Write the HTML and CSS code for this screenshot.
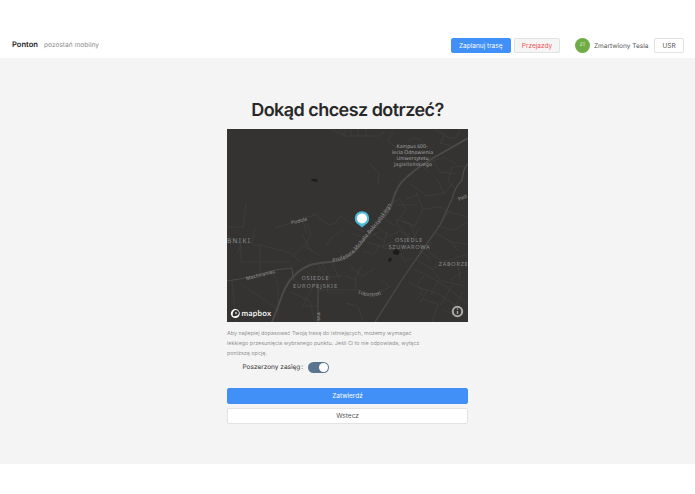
FILE: index.html
```html
<!DOCTYPE html>
<html lang="pl">
<head>
  <meta charset="UTF-8" />
  <meta name="viewport" content="width=device-width, initial-scale=1.0" />
  <title>Ponton</title>
  <link rel="stylesheet" href="styles.css">
</head>
<body>
  <header class="header">
    <div class="brand">
      <span class="brand-name">Ponton</span>
      <span class="brand-sub">pozostań mobilny</span>
    </div>
    <div class="nav">
      <button class="btn btn-primary btn-plan">Zaplanuj trasę</button>
      <button class="btn btn-danger btn-rides">Przejazdy</button>
      <span class="avatar">ZT</span>
      <span class="user-name">Zmartwiony Tesla</span>
      <button class="btn btn-role">USR</button>
    </div>
  </header>

  <main class="content">
    <div class="planner">
      <h1>Dokąd chcesz dotrzeć?</h1>

      <svg class="map" viewBox="0 0 241 193" width="241" height="193">
        <defs>
          <path id="bobrzynskiego" d="M106 133C122 130 129 123 138 110C151 95 160 84 166 72" />
          <path id="lubostron" d="M131 164Q143 170 156 165" />
        </defs>
        <rect class="land" width="241" height="193" />

        <g class="street">
          <path d="M106 1l12 6h35M113 0l5 7V0M124 7V0M139 7V0M131 7V0M153 7l4-4" />
          <path d="M19 74l-3 24H0M48 99l42-14 4 6 8 5 7-2 4-7 24 16M76 92l4 13M116 101l-12 8-5 8" />
          <path d="M166 4l-5 8 13 11 8-4M180 14q6-8 14-3l7 9M174 23l15 3M207 0l15 9 7 0 4-9M218 5l-5 9 15 4" />
          <path d="M143 35l9 9-1 11M184 55l16 12 17-3 9-10M189 63l7 17 17-2 13 6M196 80l-8 17-14-5M170 76h21M168 90l16 5 4 13M217 64l-7-14M239 37l-14 1-4 13 8 10" />
          <path d="M165 74l8-4 6 10-10 14 11 12M191 66l-13 4M203 27l10 16 16 2M200 34l17-6 12 7M184 44l10-7 7 5" />
          <path d="M0 114h25l3-14M25 116h8l31 8 9 9M33 115v33M14 116v17M14 133h50M65 139l2 12 9 7M65 128l12-11 15 9M78 117l6-12-4-9M84 122l-9-16M0 106l14 10-4 9" />
          <path d="M5 152l4 41M14 155l37 25M51 155v38M44 142l7 12M63 163l20 9 5 21M90 134l9 15 17-3M93 132l11 17M104 132l8 17M100 150l1 14h17M74 177h17V158M80 143l15 19M85 159l-9 18" />
          <path d="M126 105l14 4 12-6M148 97l15 10 10-5 13 8M155 88l13 9M140 113l16 5 10-6M147 106l11 6M135 122l12 3 6-9M160 103l-4 16 15 3M182 104l-7 17M192 98l-8 18" />
          <path d="M118 147l10 3 7-14M123 137l12 10 12-7M129 150l-1 11M91 161h40q12 7 24 1l8-4-10-8M118 174l13 3 5 16" />
          <path d="M198 120l18 13 25-8M204 130l-12-9M188 130l17 10 9 12 24 5M186 140l12 5-8 11M198 145l20 12 23 18M191 158l21 7 17 12M181 153l15 8-6 9M212 151l-8 15M225 157l-13 21M236 163l-12 20M195 170l16 5-6 18M207 103l17 10 17 2M210 97l17 4 14-8M213 96l8-13 20 5M222 110l9 12" />
          <path d="M190 112l9 9 6-8M171 122l7 10 8-3M205 141l10-8M216 180l14 8M201 160l-8 13M235 143l-12 8M230 131l3 19" />
        </g>
        <path class="road" d="M0 152L18 149 48 141 65 139 66 148M91 156V193" />
        <path class="road road-mid" d="M148 193L178 146 213 96 225 70Q228 58 235 51L237 41 241 34" />
        <path class="road road-main" d="M45 193Q51 178 56 164Q64 144 83 136C93 133 106 134 117 130C129 124 134 115 142 105C153 91 163 84 165 74Q170 55 180 48Q192 37 208 28L241 9" />

        <g class="building">
          <path d="M84 50l6 0 1 3-6-1z" />
          <path d="M161 131l2-3 2 2-1 2-2 1zM166 122l4-2 3 3-2 3-5-1z" />
        </g>

        <g class="label">
          <text x="185" y="18.500" textLength="31">Kampus 600-</text>
          <text x="185.500" y="24.500" textLength="41">lecia Odnowienia</text>
          <text x="185.500" y="30.500" textLength="32">Uniwersytetu</text>
          <text x="186" y="36.500" textLength="38">Jagiellońskiego</text>
        </g>
        <g class="label label-street">
          <text transform="translate(72.500 93.500) rotate(-13)">Podole</text>
          <text transform="translate(34 147.500) rotate(-14)" textLength="30">Machnaniec</text>
          <text transform="translate(236.300 70) rotate(-24)" textLength="9.500">Past</text>
          <text transform="translate(93 188) rotate(-90)">iska</text>
          <text class="label-path"><textPath href="#bobrzynskiego" textLength="84">Profesora Michała Bobrzyńskiego</textPath></text>
          <text class="label-path"><textPath href="#lubostron" textLength="24">Lubostroń</textPath></text>
        </g>
        <g class="label label-area">
          <text x="11.500" y="113.500" class="label-big" textLength="23">BNIKI</text>
          <text x="88" y="151" textLength="27">OSIEDLE</text>
          <text x="88" y="158.500" textLength="44">EUROPEJSKIE</text>
          <text x="181.500" y="113" textLength="27">OSIEDLE</text>
          <text x="182" y="120" textLength="41">SZUWAROWA</text>
          <text x="226.200" y="136.500" textLength="29">ZABORZE</text>
        </g>

        <path class="pin" d="M135 98.500L129.500 94A7.200 7.200 0 1 1 140.500 94Z" />
        <circle class="pin-dot" cx="135" cy="89.400" r="5" />

        <circle cx="8.300" cy="184.600" r="4.500" fill="#fff" />
        <path d="M5.900 187c-.5-2.300-.1-3.900 1-5a2.900 2.900 0 0 1 4.100 4.100c-1.200 1.100-2.800 1.300-5.100.9z" fill="#343332" />
        <path d="M9 182.800l.4.800.8.400-.8.400-.4.800-.4-.8-.8-.4.800-.4z" fill="#fff" />
        <text class="logo-text" x="14.500" y="187" textLength="29.500">mapbox</text>

        <circle cx="230.500" cy="182.500" r="4.700" fill="none" stroke="#aaa" stroke-width="2" />
        <path d="M230.500 182v3M230.500 179.500v1.300" stroke="#aaa" stroke-width="1.300" />
      </svg>

      <p class="hint">Aby najlepiej dopasować Twoją trasę do istniejących, możemy wymagać<br>lekkiego przesunięcia wybranego punktu. Jeśli Ci to nie odpowiada, wyłącz<br>poniższą opcję.</p>

      <div class="range-row">
        <span class="range-label">Poszerzony zasięg<span class="colon">:</span></span>
        <span class="switch"><span class="switch-knob"></span></span>
      </div>

      <button class="btn btn-primary btn-block">Zatwierdź</button>
      <button class="btn btn-block">Wstecz</button>
    </div>
  </main>
</body>
</html>
```

FILE: styles.css
```css
* {
  box-sizing: border-box;
}

body {
  margin: 0;
  padding-top: 33px;
  background: #fff;
  color: #333;
  font-family: Inter, sans-serif;
  font-size: 6.5px;
  text-rendering: geometricPrecision;
}

.header {
  height: 24.5px;
  padding: 0 11px 0 12px;
  display: flex;
  justify-content: space-between;
  align-items: center;
}

.brand {
  display: flex;
  align-items: baseline;
  gap: 6px;
  padding-bottom: 2px;
}

.brand-name {
  font-size: 7.6px;
  font-weight: 600;
  color: #222;
}

.brand-sub {
  font-size: 6.6px;
  color: #8c8c8c;
}

.nav {
  display: flex;
  align-items: center;
}

.btn {
  height: 15.5px;
  padding: 1px 0 0;
  border: 1px solid #e2e2e2;
  border-radius: 2px;
  background: #fff;
  color: #555;
  font-family: inherit;
  font-size: 6.5px;
  line-height: 13px;
  text-align: center;
}

.btn-primary {
  background: #4090f7;
  border-color: #4090f7;
  color: #fff;
}

.btn-danger {
  background: #f5f5f5;
  color: #ee5253;
}

.btn-plan {
  width: 59.5px;
  margin-right: 3.5px;
}

.btn-rides {
  width: 46px;
  margin-right: 15px;
}

.btn-role {
  width: 30px;
}

.avatar {
  width: 15px;
  height: 15px;
  margin-right: 4px;
  border-radius: 50%;
  background: #6fac45;
  color: #fff;
  font-size: 4.5px;
  line-height: 15px;
  text-align: center;
}

.user-name {
  width: 60px;
  padding-top: 1px;
  white-space: nowrap;
  color: #555;
}

.content {
  height: 406px;
  padding-top: 39.5px;
  background: #f4f4f4;
}

.planner {
  width: 241px;
  margin: 0 auto;
}

h1 {
  margin: 0;
  height: 32px;
  font-size: 18px;
  font-weight: 600;
  line-height: 27px;
  letter-spacing: -0.55px;
  text-align: center;
  white-space: nowrap;
  color: #282828;
}

.map {
  display: block;
}

.land {
  fill: #343332;
}

.street {
  fill: none;
  stroke: #42413f;
  stroke-width: 0.7;
}

.road {
  fill: none;
  stroke: #4b4a49;
  stroke-width: 1;
}

.road-mid {
  stroke-width: 1.3;
}

.road-main {
  stroke-width: 2;
}

.building {
  fill: #1c1c1c;
}

.label {
  fill: #a3a3a3;
  font-family: "Noto Sans", sans-serif;
  font-size: 5px;
  text-anchor: middle;
}

.label-street {
  fill: #999;
}

.label-path {
  text-anchor: start;
}

.label-area {
  fill: #8b8b8b;
  font-size: 5.6px;
}

.label-big {
  font-size: 6.5px;
}

.pin {
  fill: #4fb9da;
}

.pin-dot {
  fill: #fff;
}

.logo-text {
  fill: #fff;
  font-family: Lato, sans-serif;
  font-size: 8px;
  font-weight: 600;
}

.hint {
  margin: 7px 0 0;
  font-size: 5.4px;
  line-height: 10px;
  white-space: nowrap;
  color: #929292;
}

.range-row {
  display: flex;
  align-items: center;
  height: 12px;
  margin: 2px 0 15px 15.5px;
}

.range-label {
  width: 65px;
  white-space: nowrap;
}

.colon {
  margin-left: 1px;
}

.switch {
  width: 21px;
  height: 11px;
  padding: 1px;
  border-radius: 6px;
  background: #5a7590;
  display: flex;
  justify-content: flex-end;
}

.switch-knob {
  width: 9px;
  height: 9px;
  border-radius: 50%;
  background: #fff;
}

.btn-block {
  display: block;
  width: 100%;
  margin-bottom: 4.5px;
}
```
